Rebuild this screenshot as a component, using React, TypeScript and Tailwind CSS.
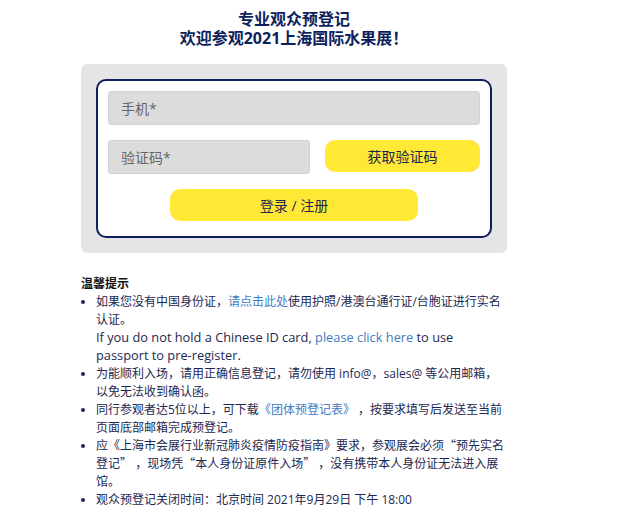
const cjk = "font-['Noto_Sans_CJK_SC',sans-serif] leading-[12px]";

export default function App() {
  const font = "font-['Segoe_UI','Open_Sans','Noto_Sans_CJK_SC',sans-serif]";
  return (
    <div className={`min-h-screen bg-white ${font}`}>
      <div className="ml-[81px] w-[426px] pt-[10px]">
        <h1 className="text-center text-[16px] font-bold leading-[19px] text-[#0d1f5c]">
          专业观众预登记
          <br />
          欢迎参观2021上海国际水果展！
        </h1>

        <div className="mt-[16px] rounded-[6px] bg-[#e5e5e5] p-[15px]">
          <form className="flex flex-col rounded-[10px] border-2 border-[#0d1f5c] bg-white px-[10px] pb-[15px] pt-[10px]">
            <input
              placeholder="手机*"
              className="h-[34px] w-full rounded-[3px] border border-[#d2d2d2] bg-[#dcdcdc] px-[12px] text-[14px] text-[#333] placeholder-[#666] outline-none"
            />
            <div className="mt-[15px] flex items-start gap-[15px]">
              <input
                placeholder="验证码*"
                className="h-[34px] w-[202px] rounded-[3px] border border-[#d2d2d2] bg-[#dcdcdc] px-[12px] text-[14px] text-[#333] placeholder-[#666] outline-none"
              />
              <button
                type="button"
                className="h-[32px] flex-1 rounded-[10px] bg-[#ffe936] text-[14px] text-[#1a2550]"
              >
                获取验证码
              </button>
            </div>
            <button
              type="button"
              className="mx-auto mt-[15px] h-[32px] w-[248px] rounded-[10px] bg-[#ffe936] text-[14px] text-[#1a2550]"
            >
              登录 / 注册
            </button>
          </form>
        </div>

        <div className="mt-[22px] text-[12px] leading-[18px] text-[#1d2850]">
          <p className="font-bold text-[#111]">温馨提示</p>
          <ul className="list-disc pl-[15px]">
            <li>
              如果您没有中国身份证，<a className="text-[#3f7bbf]">请点击此处</a>使用护照/港澳台通行证/台胞证进行实名认证。
              <br />
              <span className="text-[12.8px] leading-[14px]">
                If you do not hold a Chinese ID card, <a className="text-[#3f7bbf]">please click here</a> to use passport to pre-register.
              </span>
            </li>
            <li>为能顺利入场，请用正确信息登记，请勿使用 info@，sales@ 等公用邮箱，以免无法收到确认函。</li>
            <li>
              同行参观者达5位以上，可下载<a className="text-[#3f7bbf]">《团体预登记表》</a> ，按要求填写后发送至当前页面底部邮箱完成预登记。
            </li>
            <li>
              应《上海市会展行业新冠肺炎疫情防疫指南》要求，参观展会必须<span className={cjk}>“</span>预先实名登记<span className={cjk}>”</span>{" "}
              ，现场凭<span className={cjk}>“</span>本人身份证原件入场<span className={cjk}>”</span>{" "}
              ，没有携带本人身份证无法进入展馆。
            </li>
            <li>观众预登记关闭时间：北京时间 2021年9月29日 下午 18:00</li>
          </ul>
        </div>
      </div>
    </div>
  );
}
